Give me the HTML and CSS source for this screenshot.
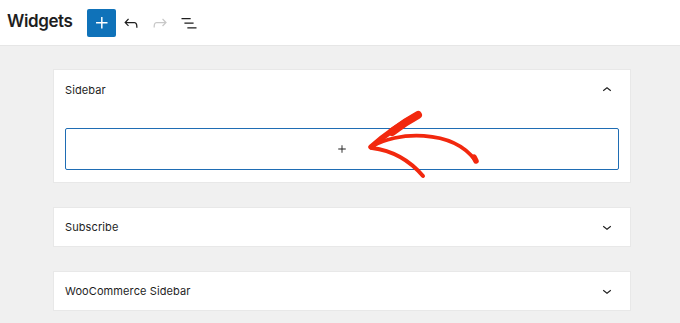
FILE: index.html
```html
<!DOCTYPE html>
<html lang="en">
<head>
<meta charset="utf-8">
<title>Widgets</title>
<link rel="stylesheet" href="styles.css">
</head>
<body>
<header class="topbar">
  <h1 class="title">Widgets</h1>
  <div class="tools">
    <button class="tool tool-primary" aria-label="Add block">
      <svg viewBox="0 0 24 24" width="22" height="22"><path d="M11 12.5V18h1.6v-5.5H18V11h-5.4V5.5H11V11H5.5v1.5z" fill="#fff"/></svg>
    </button>
    <button class="tool" aria-label="Undo">
      <svg viewBox="0 0 24 24" width="20" height="20"><path d="M18.3 11.7c-.6-.6-1.4-.9-2.3-.9H6.7l2.9-3.3-1.1-1-4.5 5L8.5 16l1-1-2.7-2.7H16c.5 0 .9.2 1.3.5 1 1 1 3.4 1 4.5v.3h1.5v-.2c0-1.5 0-4.3-1.5-5.7z" fill="#1e1e1e"/></svg>
    </button>
    <button class="tool tool-disabled" aria-label="Redo">
      <svg viewBox="0 0 24 24" width="20" height="20"><path d="M15.6 6.5l-1.1 1 2.9 3.3H8c-.9 0-1.7.3-2.3.9-1.4 1.5-1.4 4.2-1.4 5.6v.2h1.5v-.3c0-1.1 0-3.5 1-4.5.3-.3.7-.5 1.3-.5h9.2L14.5 15l1.1 1.1 4.6-4.6-4.6-5z" fill="#c8c8c8"/></svg>
    </button>
    <button class="tool" aria-label="List view">
      <svg viewBox="0 0 24 24" width="20" height="20"><path d="M3 6h11v1.5H3V6zm3.5 5.5h11V13h-11v-1.5zM21 17H10v1.5h11V17z" fill="#1e1e1e"/></svg>
    </button>
  </div>
</header>

<main class="content">
  <section class="panel panel-open">
    <div class="panel-head">
      <span class="panel-title">Sidebar</span>
      <svg class="chev" viewBox="0 0 24 24" width="18" height="18"><path d="M6.5 12.4L12 8l5.5 4.4-.9 1.2L12 10l-4.6 3.6z" fill="#1e1e1e"/></svg>
    </div>
    <div class="panel-body">
      <div class="appender">
        <svg viewBox="0 0 24 24" width="18" height="18"><path d="M11.4 12.6V17h1.2v-4.4H17v-1.2h-4.4V7h-1.2v4.4H7v1.2z" fill="#1e1e1e"/></svg>
      </div>
    </div>
  </section>

  <section class="panel">
    <div class="panel-head">
      <span class="panel-title">Subscribe</span>
      <svg class="chev" viewBox="0 0 24 24" width="18" height="18"><path d="M17.5 11.6L12 16l-5.5-4.4.9-1.2L12 14l4.6-3.6z" fill="#1e1e1e"/></svg>
    </div>
  </section>

  <section class="panel">
    <div class="panel-head">
      <span class="panel-title">WooCommerce Sidebar</span>
      <svg class="chev" viewBox="0 0 24 24" width="18" height="18"><path d="M17.5 11.6L12 16l-5.5-4.4.9-1.2L12 14l4.6-3.6z" fill="#1e1e1e"/></svg>
    </div>
  </section>
</main>

<svg class="annotation" viewBox="0 0 680 323" width="680" height="323" aria-hidden="true">
  <g fill="none" stroke="#f2280e" stroke-linecap="round" stroke-linejoin="round">
    <path d="M417 115 Q 393 128 371 147" stroke-width="5.5"/>
    <path d="M418 115 Q 405 122 392 132" stroke-width="8"/>
    <path d="M371 147 C 396 131, 452 129, 475 160" stroke-width="3.6"/>
    <path d="M474 157 L 476 161" stroke-width="5.5"/>
    <path d="M372 148 C 396 151, 411 162, 423 176" stroke-width="4"/>
  </g>
</svg>
</body>
</html>
```

FILE: styles.css
```css
* { box-sizing: border-box; }

html, body {
  margin: 0;
  padding: 0;
}

body {
  width: 680px;
  height: 323px;
  overflow: hidden;
  background: #f0f0f0;
  font-family: Inter, "Noto Sans", "Liberation Sans", sans-serif;
  color: #1e1e1e;
  position: relative;
}

.topbar {
  height: 46px;
  background: #fff;
  border-bottom: 1px solid #e6e6e6;
  display: flex;
  align-items: center;
  padding-left: 7px;
}

.title {
  margin: 0 15px 0 0;
  font-size: 17px;
  font-weight: 600;
  letter-spacing: -0.4px;
  line-height: 1;
  padding-bottom: 2px;
}

.tools {
  display: flex;
  align-items: center;
  gap: 1px;
}

.tool {
  width: 28px;
  height: 28px;
  border: 0;
  padding: 0;
  margin: 0;
  background: transparent;
  display: flex;
  align-items: center;
  justify-content: center;
  border-radius: 2px;
}

.tool-primary {
  width: 29px;
  background: #0f72b9;
}

.content {
  padding: 23px 49px 0 53px;
  display: flex;
  flex-direction: column;
  gap: 24px;
}

.panel {
  background: #fff;
  border: 1px solid #e8e8e8;
}

.panel-head {
  height: 38px;
  display: flex;
  align-items: center;
  justify-content: space-between;
  padding: 0 14px 0 11px;
}

.panel-title {
  font-size: 11px;
  font-weight: 400;
  letter-spacing: 0.1px;
}

.panel-open .panel-head {
  height: 39px;
}

.panel-body {
  padding: 19px 11px 12px;
}

.appender {
  height: 42px;
  border: 1px solid #1f6db4;
  border-radius: 2px;
  display: flex;
  align-items: center;
  justify-content: center;
}

.annotation {
  position: absolute;
  left: 0;
  top: 0;
  pointer-events: none;
}
```
